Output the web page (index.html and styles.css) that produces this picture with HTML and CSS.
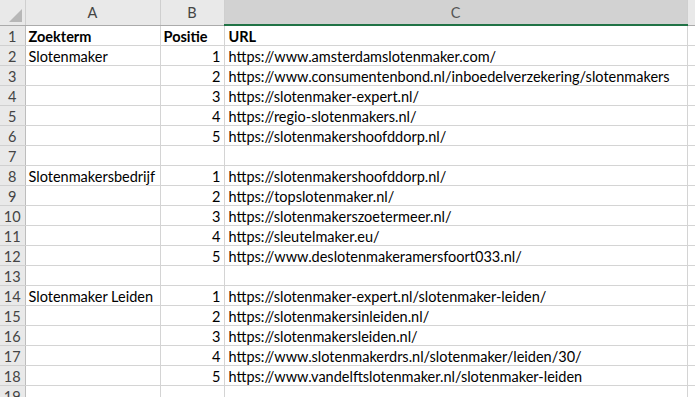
FILE: index.html
```html
<!DOCTYPE html>
<html>
<head>
<meta charset="utf-8">
<link rel="stylesheet" href="styles.css">
</head>
<body>
<table class="sheet">
  <colgroup>
    <col class="c-rh"><col class="c-a"><col class="c-b"><col class="c-c"><col class="c-d">
  </colgroup>
  <thead>
    <tr class="colhead">
      <th class="corner"><span class="tri"></span></th>
      <th>A</th>
      <th>B</th>
      <th class="sel">C</th>
      <th class="last"></th>
    </tr>
  </thead>
  <tbody>
    <tr><th>1</th><td class="b">Zoekterm</td><td class="b">Positie</td><td class="b url">URL</td><td></td></tr>
    <tr><th>2</th><td>Slotenmaker</td><td class="n">1</td><td class="url">https://www.amsterdamslotenmaker.com/</td><td></td></tr>
    <tr><th>3</th><td></td><td class="n">2</td><td class="url">https://www.consumentenbond.nl/inboedelverzekering/slotenmakers</td><td></td></tr>
    <tr><th>4</th><td></td><td class="n">3</td><td class="url">https://slotenmaker-expert.nl/</td><td></td></tr>
    <tr><th>5</th><td></td><td class="n">4</td><td class="url">https://regio-slotenmakers.nl/</td><td></td></tr>
    <tr><th>6</th><td></td><td class="n">5</td><td class="url">https://slotenmakershoofddorp.nl/</td><td></td></tr>
    <tr><th>7</th><td></td><td></td><td></td><td></td></tr>
    <tr><th>8</th><td>Slotenmakersbedrijf</td><td class="n">1</td><td class="url">https://slotenmakershoofddorp.nl/</td><td></td></tr>
    <tr><th>9</th><td></td><td class="n">2</td><td class="url">https://topslotenmaker.nl/</td><td></td></tr>
    <tr><th>10</th><td></td><td class="n">3</td><td class="url">https://slotenmakerszoetermeer.nl/</td><td></td></tr>
    <tr><th>11</th><td></td><td class="n">4</td><td class="url">https://sleutelmaker.eu/</td><td></td></tr>
    <tr><th>12</th><td></td><td class="n">5</td><td class="url">https://www.deslotenmakeramersfoort033.nl/</td><td></td></tr>
    <tr><th>13</th><td></td><td></td><td></td><td></td></tr>
    <tr><th>14</th><td>Slotenmaker Leiden</td><td class="n">1</td><td class="url">https://slotenmaker-expert.nl/slotenmaker-leiden/</td><td></td></tr>
    <tr><th>15</th><td></td><td class="n">2</td><td class="url">https://slotenmakersinleiden.nl/</td><td></td></tr>
    <tr><th>16</th><td></td><td class="n">3</td><td class="url">https://slotenmakersleiden.nl/</td><td></td></tr>
    <tr><th>17</th><td></td><td class="n">4</td><td class="url">https://www.slotenmakerdrs.nl/slotenmaker/leiden/30/</td><td></td></tr>
    <tr><th>18</th><td></td><td class="n">5</td><td class="url">https://www.vandelftslotenmaker.nl/slotenmaker-leiden</td><td></td></tr>
    <tr><th>19</th><td></td><td></td><td></td><td></td></tr>
  </tbody>
</table>
</body>
</html>
```
FILE: styles.css
```css
html, body {
  margin: 0;
  padding: 0;
  background: #ffffff;
  overflow: hidden;
}
.sheet {
  border-collapse: collapse;
  table-layout: fixed;
  width: 700px;
  font-family: Lato, "Liberation Sans", sans-serif;
  font-size: 14.5px;
  color: #000;
}
.c-rh { width: 25px; }
.c-a { width: 135px; }
.c-b { width: 64px; }
.c-c { width: 463px; }
.c-d { width: 13px; }

.sheet td, .sheet th {
  padding: 0;
  white-space: nowrap;
  overflow: visible;
}
.sheet tbody tr { height: 20px; }
.sheet tbody td {
  border-right: 1px solid #d4d4d4;
  border-bottom: 1px solid #d4d4d4;
  padding: 2px 3px 0 3px;
  line-height: 17px;
  vertical-align: middle;
}
.sheet tbody td.url { padding-left: 4px; overflow: visible; }
.sheet tbody td.n { text-align: right; }
.sheet tbody td.b { font-weight: bold; }
.sheet tbody th {
  background: #e9e9e9;
  color: #444;
  font-weight: normal;
  border-right: 1px solid #bdbdbd;
  border-bottom: 1px solid #d0d0d0;
  text-align: center;
  padding-top: 2px;
}
.colhead { height: 25px; }
.colhead th {
  background: #e9e9e9;
  color: #444;
  font-weight: normal;
  border-right: 1px solid #cfcfcf;
  border-bottom: 1px solid #ababab;
  text-align: center;
  vertical-align: middle;
  padding-top: 1px;
}
.colhead th.sel {
  background: #d2d2d2;
  color: #555;
  border-bottom: 2px solid #217346;
}
.colhead th.corner {
  position: relative;
}
.tri {
  position: absolute;
  right: 3px;
  bottom: 3px;
  width: 0;
  height: 0;
  border-left: 13px solid transparent;
  border-bottom: 13px solid #b7b7b7;
}
```
